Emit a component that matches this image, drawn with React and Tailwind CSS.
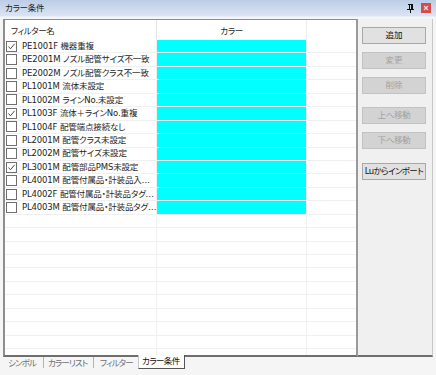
import React from "react";

const rows = [
  [true, "PE1001F 機器重複"],
  [false, "PE2001M ノズル配管サイズ不一致"],
  [false, "PE2002M ノズル配管クラス不一致"],
  [false, "PL1001M 流体未設定"],
  [false, "PL1002M ラインNo.未設定"],
  [true, "PL1003F 流体＋ラインNo.重複"],
  [false, "PL1004F 配管端点接続なし"],
  [false, "PL2001M 配管クラス未設定"],
  [false, "PL2002M 配管サイズ未設定"],
  [true, "PL3001M 配管部品PMS未設定"],
  [false, "PL4001M 配管付属品・計装品入…"],
  [false, "PL4002F 配管付属品・計装品タグ…"],
  [false, "PL4003M 配管付属品・計装品タグ…"],
];

function Check({ checked }) {
  return (
    <svg width="11" height="11" viewBox="0 0 11 11" className="shrink-0">
      <rect x="0.5" y="0.5" width="10" height="10" fill="#fff" stroke="#6f6f6f" />
      {checked && (
        <path d="M2.5 5.5 L4.5 7.8 L8.6 2.8" fill="none" stroke="#4a4a4a" strokeWidth="1" />
      )}
    </svg>
  );
}

function Btn({ children, disabled, className = "" }) {
  return (
    <div
      className={
        "h-[17px] w-[64px] flex items-center justify-center border whitespace-nowrap overflow-hidden " +
        (disabled
          ? "bg-[#d3d3d3] border-[#c2c2c2] text-[#a2a2a2] "
          : "bg-[#e1e1e1] border-[#a8a8a8] text-[#111] ") +
        className
      }
    >
      {children}
    </div>
  );
}

export default function App() {
  const empty = Array.from({ length: 12 });
  return (
    <div className="w-[436px] h-[375px] bg-[#f5f5f5] flex flex-col overflow-hidden text-[8.5px] leading-none text-[#1e1e1e] [font-family:'DejaVu_Sans','Noto_Sans_CJK_JP',sans-serif] [font-feature-settings:'palt']">
      {/* title bar */}
      <div className="h-[17px] shrink-0 flex items-center pl-[5px] pr-[5px] bg-gradient-to-b from-[#bccde6] to-[#dae4f3] border-b border-[#e8eef7]">
        <span className="text-[#1a1a1a] tracking-[-0.3px]">カラー条件</span>
        <div className="ml-auto flex items-center gap-[7px]">
          <svg width="7" height="9" viewBox="0 0 7 9">
            <rect x="1" y="0" width="5" height="1" fill="#111" />
            <rect x="2" y="1" width="1" height="4" fill="#111" />
            <rect x="4" y="1" width="2" height="4" fill="#111" />
            <rect x="0" y="5" width="7" height="1" fill="#111" />
            <rect x="3" y="6" width="1" height="3" fill="#111" />
          </svg>
          <svg width="10" height="10" viewBox="0 0 10 10">
            <rect x="0" y="0" width="10" height="10" fill="#d24c4c" />
            <path d="M3 3 L7 7 M7 3 L3 7" stroke="#f6d6d6" strokeWidth="1.3" />
          </svg>
        </div>
      </div>

      {/* main */}
      <div className="mt-[2px] h-[338px] shrink-0 flex pl-[3px]">
        {/* grid */}
        <div className="w-[355px] h-full border-l-2 border-t border-[#8e8e8e] border-r-2 border-r-[#9a9a9a] border-b-2 border-b-[#6e6e6e] bg-white overflow-hidden flex flex-col">
          <div className="h-[20px] shrink-0 flex">
            <div className="w-[152px] border-r border-[#e6e6e6] flex items-center pl-[6px] pt-[2px] tracking-[-0.4px]">フィルター名</div>
            <div className="w-[150px] border-r border-[#ededed] flex items-center justify-center pt-[2px] tracking-[-0.4px]">カラー</div>
            <div className="flex-1" />
          </div>
          {rows.map(([c, t], i) => (
            <div key={i} className="h-[13.45px] shrink-0 flex">
              <div className="w-[152px] border-r border-b border-[#f0f0f0] flex items-center pl-[1px] gap-[5px] overflow-hidden whitespace-nowrap tracking-[-0.15px]">
                <Check checked={c} />
                <span>{t}</span>
              </div>
              <div className="w-[150px] border-r border-b border-[#eeeeee] bg-[#00ffff] bg-clip-padding" />
              <div className="flex-1 border-b border-[#f0f0f0]" />
            </div>
          ))}
          {empty.map((_, i) => (
            <div key={"e" + i} className="h-[13.45px] shrink-0 flex">
              <div className="w-[152px] border-r border-b border-[#f0f0f0]" />
              <div className="w-[150px] border-r border-b border-[#f0f0f0]" />
              <div className="flex-1 border-b border-[#f0f0f0]" />
            </div>
          ))}
        </div>
        {/* right panel */}
        <div className="w-[75px] h-full bg-[#f0f0f0] border-r border-[#c8c8c8] border-b-2 border-b-[#6e6e6e] flex flex-col pl-[4px] pt-[8px]">
          <Btn>追加</Btn>
          <Btn disabled className="mt-[8px]">変更</Btn>
          <Btn disabled className="mt-[8px]">削除</Btn>
          <Btn disabled className="mt-[13px] tracking-[-0.3px]">上へ移動</Btn>
          <Btn disabled className="mt-[8px] tracking-[-0.3px]">下へ移動</Btn>
          <Btn className="mt-[14px] border-[#8c8c8c] tracking-[-0.6px]">Luからインポート</Btn>
        </div>
      </div>

      {/* tabs */}
      <div className="flex items-start h-[18px] text-[#707070] whitespace-nowrap tracking-[-0.9px]">
        <div className="w-[43px] pl-[8px] h-[11px] mt-[1px] flex items-center">シンボル</div>
        <div className="w-px h-[11px] bg-[#b4b4b4]" />
        <div className="w-[49px] pl-[4px] h-[11px] mt-[1px] flex items-center">カラーリスト</div>
        <div className="w-px h-[11px] bg-[#b4b4b4]" />
        <div className="w-[44px] pl-[6px] h-[11px] mt-[1px] flex items-center">フィルター</div>
        <div className="relative -mt-[2px] h-[14px] w-[47px] pl-[3px] flex items-center bg-white border-l border-[#c8c8c8] border-r border-r-[#555] border-b border-b-[#555] text-[#111] tracking-[-0.6px]">
          カラー条件
        </div>
      </div>
    </div>
  );
}
